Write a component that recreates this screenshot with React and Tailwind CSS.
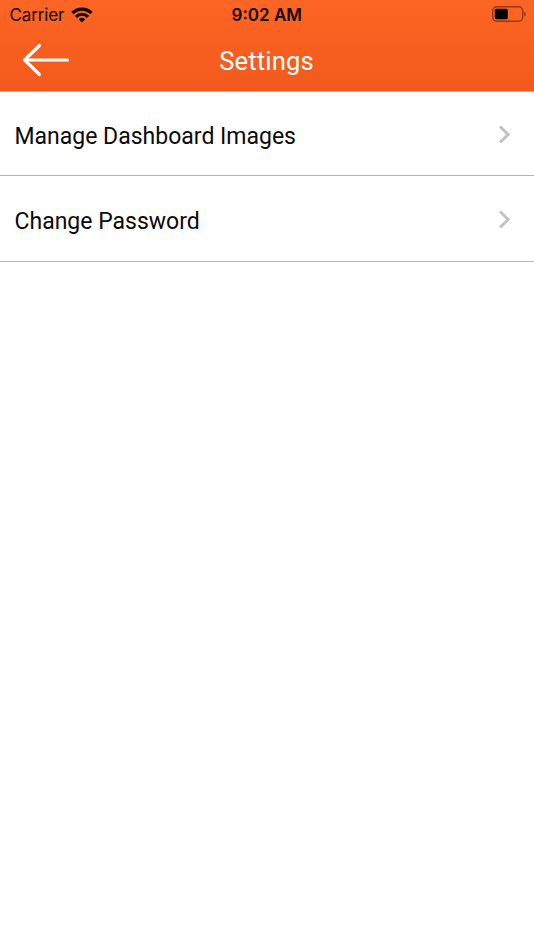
const ROWS = ['Manage Dashboard Images', 'Change Password']

function WifiIcon() {
  return (
    <svg width="22" height="16" viewBox="0 0 22 16" fill="none" stroke="#120500" strokeWidth="3.2">
      <path d="M1.4 6 A13.6 13.6 0 0 1 20.6 6" />
      <path d="M4.9 9.8 A8.6 8.6 0 0 1 17.1 9.8" />
      <path d="M11 15.4 L7.8 12.2 A4.5 4.5 0 0 1 14.2 12.2 Z" fill="#120500" stroke="none" />
    </svg>
  )
}

function BatteryIcon() {
  return (
    <svg width="34" height="16" viewBox="0 0 34 16" fill="none">
      <rect x="0.7" y="0.7" width="30" height="14.6" rx="4" stroke="#8f3a14" strokeWidth="1.4" />
      <rect x="2.8" y="2.8" width="12.9" height="10.4" rx="1.5" fill="#000" />
      <path d="M32.2 5.6 C34.2 6.4 34.2 9.6 32.2 10.4 Z" fill="#8f3a14" />
    </svg>
  )
}

function StatusBar() {
  return (
    <div className="grid h-[30px] grid-cols-3 items-center pr-2 pl-[9.5px] font-['Inter',sans-serif] text-[#120500]">
      <div className="flex items-center gap-[7px]">
        <span className="text-[17px] leading-[30px] tracking-[-0.15px]">Carrier</span>
        <WifiIcon />
      </div>
      <span className="pr-[2px] text-center text-[17px] leading-[30px] font-semibold">9:02 AM</span>
      <div className="flex justify-end pb-[2px]">
        <BatteryIcon />
      </div>
    </div>
  )
}

function NavBar() {
  return (
    <div className="grid h-[61px] grid-cols-[100px_1fr_100px] items-center">
      <button className="pb-[2px] pl-[22px]" aria-label="Back">
        <svg width="48" height="34" viewBox="0 0 48 34" fill="none" stroke="#fff" strokeWidth="3.2" strokeLinecap="round" strokeLinejoin="round">
          <path d="M17.5 2.5 L2.5 17 L17.5 31.5 M2.5 17 H45.5" />
        </svg>
      </button>
      <h1 className="pt-[2px] pr-px text-center text-[25.5px] tracking-[0.2px] text-white">Settings</h1>
    </div>
  )
}

function SettingsRow({ label }) {
  return (
    <li className="flex h-[86px] items-center justify-between border-b border-[#b2b2b2] pr-[23px] pl-[14.5px] first:h-[84px]">
      <span className="pt-[7px] text-[23px] text-[#0a0a0a]">{label}</span>
      <svg className="mt-[2px]" width="13" height="19" viewBox="0 0 13 19" fill="none" stroke="#c2c2c2" strokeWidth="3">
        <path d="M2 1.5 L10.2 9.5 L2 17.5" />
      </svg>
    </li>
  )
}

export default function App() {
  return (
    <div className="h-[950px] bg-white font-['Roboto',sans-serif]">
      <header className="h-[92px] border-b border-[#f6a584] bg-linear-to-b from-[#fd6524] to-[#f15a1c]">
        <StatusBar />
        <NavBar />
      </header>
      <ul>
        {ROWS.map((label) => (
          <SettingsRow key={label} label={label} />
        ))}
      </ul>
    </div>
  )
}
